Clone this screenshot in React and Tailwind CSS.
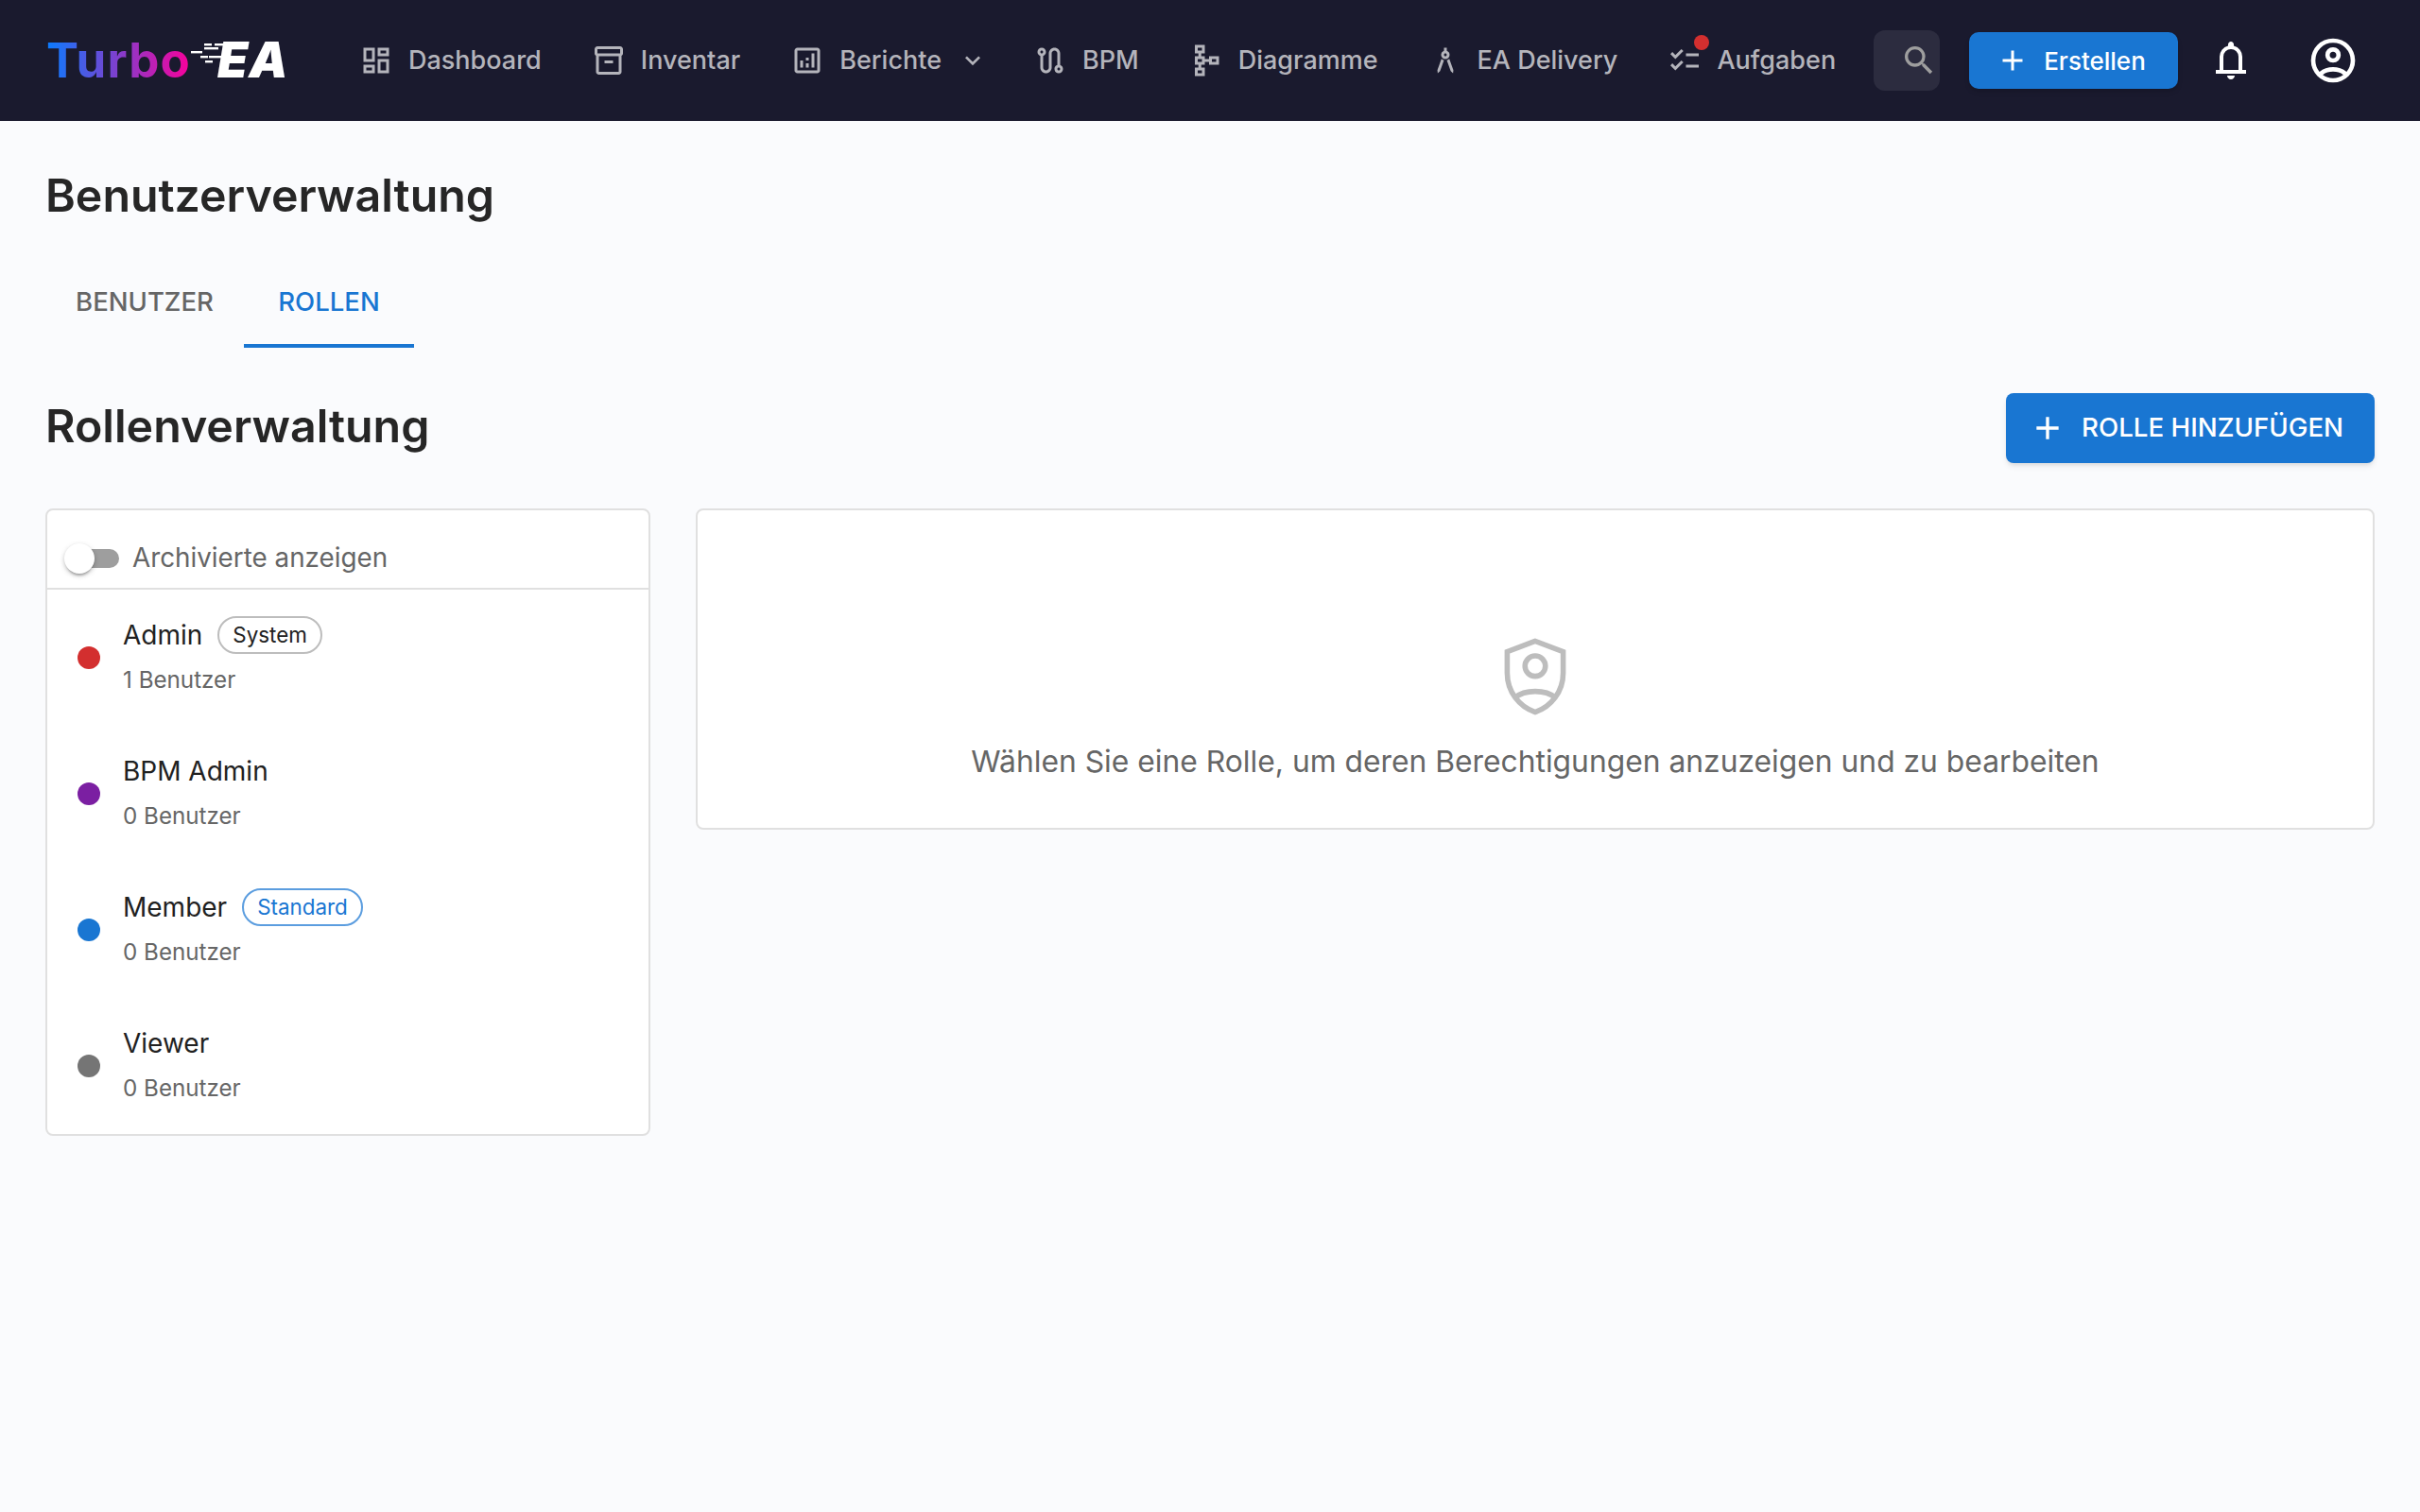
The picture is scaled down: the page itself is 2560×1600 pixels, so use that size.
import React from 'react';
import {
  MdOutlineRoute,
  MdOutlineSchema,
  MdOutlineArchitecture,
  MdOutlineChecklist,
  MdSearch,
  MdAdd,
  MdKeyboardArrowDown,
} from 'react-icons/md';

// material symbols, react-icons only has the older outlines
const Symbol = ({ d, size = 36 }) => (
  <svg width={size} height={size} viewBox="0 0 24 24" fill="currentColor" className="block">
    <path d={d} />
  </svg>
);

const DashboardIcon = ({ size }) => (
  <Symbol size={size} d="M13 9V3h8v6zM3 13V3h8v10zm10 8V11h8v10zM3 21v-6h8v6zM5 11h4V5H5zm10 8h4v-6h-4zm0-12h4V5h-4zM5 19h4v-2H5zm4-8" />
);
const InventoryIcon = ({ size }) => (
  <Symbol size={size} d="M5 22q-.825 0-1.412-.587T3 20V8.725q-.45-.275-.725-.712T2 7V4q0-.825.588-1.412T4 2h16q.825 0 1.413.588T22 4v3q0 .575-.275 1.013T21 8.724V20q0 .825-.587 1.413T19 22zM5 9v11h14V9zM4 7h16V4H4zm5 7h6v-2H9zm3 .5" />
);
const AssessmentIcon = ({ size }) => (
  <Symbol size={size} d="M7 17h2v-5H7zm8 0h2V7h-2zm-4 0h2v-3h-2zm0-5h2v-2h-2zM5 21q-.825 0-1.412-.587T3 19V5q0-.825.588-1.412T5 3h14q.825 0 1.413.588T21 5v14q0 .825-.587 1.413T19 21zm0-2h14V5H5zM5 5v14z" />
);
const BellIcon = ({ size }) => (
  <Symbol size={size} d="M4 19v-2h2v-7q0-2.075 1.25-3.687T10.5 4.2v-.7q0-.625.438-1.062T12 2t1.063.438T13.5 3.5v.7q2 .5 3.25 2.113T18 10v7h2v2zm8-7.5M12 22q-.825 0-1.412-.587T10 20h4q0 .825-.587 1.413T12 22m-4-5h8v-7q0-1.65-1.175-2.825T12 6T9.175 7.175T8 10z" />
);
const AccountIcon = ({ size }) => (
  <Symbol size={size} d="M5.85 17.1q1.275-.975 2.85-1.537T12 15t3.3.563t2.85 1.537q.875-1.025 1.363-2.325T20 12q0-3.325-2.337-5.663T12 4T6.337 6.338T4 12q0 1.475.488 2.775T5.85 17.1M12 13q-1.475 0-2.488-1.012T8.5 9.5t1.013-2.488T12 6t2.488 1.013T15.5 9.5t-1.012 2.488T12 13m0 9q-2.075 0-3.9-.788t-3.175-2.137T2.788 15.9T2 12t.788-3.9t2.137-3.175T8.1 2.788T12 2t3.9.788t3.175 2.137T21.213 8.1T22 12t-.788 3.9t-2.137 3.175t-3.175 2.138T12 22m0-2q1.325 0 2.5-.387t2.15-1.113q-.975-.725-2.15-1.112T12 17t-2.5.388T7.35 18.5q.975.725 2.15 1.113T12 20m0-9q.65 0 1.075-.425T13.5 9.5t-.425-1.075T12 8t-1.075.425T10.5 9.5t.425 1.075T12 11m0-1.5m0 9" />
);

const navItems = [
  { icon: DashboardIcon, label: 'Dashboard' },
  { icon: InventoryIcon, label: 'Inventar' },
  { icon: AssessmentIcon, label: 'Berichte', chevron: true },
  { icon: MdOutlineRoute, label: 'BPM' },
  { icon: MdOutlineSchema, label: 'Diagramme' },
  { icon: MdOutlineArchitecture, label: 'EA Delivery' },
  { icon: MdOutlineChecklist, label: 'Aufgaben', badge: true },
];

const roles = [
  { name: 'Admin', color: 'bg-[#d32f2f]', users: '1 Benutzer', chip: 'System' },
  { name: 'BPM Admin', color: 'bg-[#7b1fa2]', users: '0 Benutzer' },
  { name: 'Member', color: 'bg-[#1976d2]', users: '0 Benutzer', chip: 'Standard', primary: true },
  { name: 'Viewer', color: 'bg-[#757575]', users: '0 Benutzer' },
];

const Logo = () => (
  <div className="flex items-center w-[306px] pl-[49px] shrink-0">
    <div className="w-[181px] shrink-0">
      <span className="bg-linear-to-r/srgb from-[#0a7cff] to-[#fa009a] bg-clip-text text-transparent text-[51px] leading-[60px] font-bold tracking-[1.2px]">
        Turbo
      </span>
    </div>
    <div className="relative">
      <span className="text-white text-[52px] leading-[60px] font-black italic tracking-[1px]">EA</span>
      {/* speed lines running into the E */}
      <svg className="absolute left-[-35px] top-[1px]" width="70" height="60" viewBox="195 35 70 60">
        <g fill="#ffffff">
          <rect x="202" y="54" width="12" height="2.4" />
          <rect x="216" y="46" width="8" height="2.4" />
          <rect x="227" y="46" width="11" height="2.4" />
          <rect x="216" y="50" width="15" height="2.4" />
          <rect x="212" y="59" width="8" height="2.4" />
          <rect x="221" y="59" width="13" height="2.4" />
          <rect x="217" y="64" width="8" height="2.4" />
        </g>
      </svg>
    </div>
  </div>
);

const NavItem = ({ item }) => {
  const Icon = item.icon;
  return (
    <div className="flex items-center h-[72px] px-[24px] gap-[16px] text-[#b4b4bb] whitespace-nowrap">
      <div className="relative">
        <Icon size={36} />
        {item.badge && <span className="absolute right-[-8px] top-[-9px] w-[16px] h-[16px] rounded-full bg-[#d32f2f]" />}
      </div>
      <span className="text-[27px] leading-[40px] font-medium">{item.label}</span>
      {item.chevron && <MdKeyboardArrowDown size={32} className="ml-[1px] mr-[-5px]" />}
    </div>
  );
};

const Header = () => (
  <header className="flex items-center h-[128px] bg-[#1a1a2e]">
    <Logo />
    <nav className="flex items-center ml-[50px] gap-[5px]">
      {navItems.map((item) => (
        <NavItem key={item.label} item={item} />
      ))}
    </nav>
    <div className="flex items-center justify-end w-[70px] h-[64px] ml-[16px] pr-[2px] rounded-[12px] bg-[#2c2c3f] text-[#9e9e9e]">
      <MdSearch size={40} />
    </div>
    <button className="flex items-center h-[60px] w-[221px] ml-[31px] pl-[28px] gap-[15px] rounded-[10px] bg-[#1976d2] text-white text-[26px] font-medium shadow-md">
      <MdAdd size={36} />
      Erstellen
    </button>
    <div className="ml-[32px] text-white">
      <BellIcon size={48} />
    </div>
    <div className="ml-[56px] text-white">
      <AccountIcon size={56} />
    </div>
  </header>
);

const Tabs = () => (
  <div className="flex h-[96px] mt-[33px] text-[27.5px] font-medium">
    <div className="flex items-center justify-center w-[210px] text-[#666666]">BENUTZER</div>
    <div className="flex items-center justify-center w-[180px] pt-[4px] text-[#1976d2] border-b-[4px] border-[#1976d2]">ROLLEN</div>
  </div>
);

const RoleRow = ({ role }) => (
  <div className="flex items-center h-[144px] pl-[32px]">
    <span className={`w-[24px] h-[24px] rounded-full shrink-0 ${role.color}`} />
    <div className="ml-[24px]">
      <div className="flex items-center h-[40px]">
        <span className="text-[28px] text-[#212121]">{role.name}</span>
        {role.chip && (
          <span
            className={`flex items-center h-[40px] px-[14px] ml-[16px] rounded-full border-2 text-[22.4px] ${
              role.primary ? 'border-[#5b9ddf] text-[#1976d2]' : 'border-[#bdbdbd] text-[#212121]'
            }`}
          >
            {role.chip}
          </span>
        )}
      </div>
      <div className="mt-[8px] text-[24.2px] leading-[40px] text-[#666666]">{role.users}</div>
    </div>
  </div>
);

const ShieldPerson = () => (
  <svg width="96" height="96" viewBox="0 0 24 24" fill="none" stroke="#bdbdbd" strokeWidth="1.4">
    <path d="M12 2.6 L4.6 5.4 V11 C4.6 16 7.8 20 12 21.4 C16.2 20 19.4 16 19.4 11 V5.4 Z" />
    <circle cx="12" cy="9.2" r="2.7" />
    <path d="M6.6 17.6 C8 16.4 10 15.9 12 15.9 C14 15.9 16 16.4 17.4 17.6" />
  </svg>
);

export default function App() {
  return (
    <div className="min-h-[1600px] bg-[#fafbfd] font-['Inter',sans-serif]">
      <Header />
      <main className="px-[48px]">
        <h1 className="pt-[47px] text-[48.3px] leading-[64px] font-semibold text-[#262626]">Benutzerverwaltung</h1>
        <Tabs />
        <div className="flex items-center justify-between mt-[48px]">
          <h2 className="pb-[5px] text-[48.3px] leading-[64px] font-semibold text-[#262626]">Rollenverwaltung</h2>
          <button className="flex items-center h-[74px] w-[390px] pl-[24px] gap-[16px] rounded-[8px] bg-[#1976d2] text-white text-[27.7px] font-medium shadow-md">
            <MdAdd size={40} />
            ROLLE HINZUFÜGEN
          </button>
        </div>
        <div className="flex items-start gap-[48px] mt-[48px]">
          <div className="w-[640px] shrink-0 rounded-[8px] border-2 border-[#e0e0e0] bg-white">
            <div className="flex items-center h-[84px] pl-[18px] pt-[20px] border-b-2 border-[#e0e0e0]">
              <div className="relative w-[58px] h-[32px] shrink-0">
                <span className="absolute left-[6px] right-0 top-[6px] h-[20px] rounded-full bg-[#9e9e9e]" />
                <span className="absolute left-0 top-0 w-[32px] h-[32px] rounded-full bg-white shadow-[0_4px_2px_-2px_rgba(0,0,0,0.2),0_2px_4px_rgba(0,0,0,0.14),0_2px_6px_rgba(0,0,0,0.12)]" />
              </div>
              <span className="ml-[14px] text-[27.8px] text-[#666666]">Archivierte anzeigen</span>
            </div>
            {roles.map((role) => (
              <RoleRow key={role.name} role={role} />
            ))}
          </div>
          <div className="flex flex-col items-center flex-1 h-[340px] pt-[128px] rounded-[8px] border-2 border-[#e0e0e0] bg-white">
            <ShieldPerson />
            <p className="mt-[18px] text-[31.8px] leading-[48px] text-[#666666]">
              Wählen Sie eine Rolle, um deren Berechtigungen anzuzeigen und zu bearbeiten
            </p>
          </div>
        </div>
      </main>
    </div>
  );
}
